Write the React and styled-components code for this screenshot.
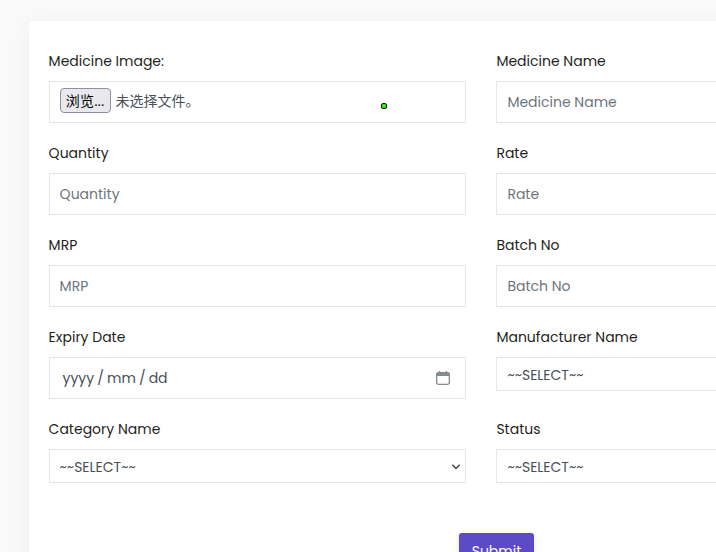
import React from "react";
import styled, { createGlobalStyle } from "styled-components";

const sans = `Poppins, Inter, "Noto Sans CJK SC", sans-serif`;

const GlobalStyle = createGlobalStyle`
  * { box-sizing: border-box; }
  body {
    margin: 0;
    background: #f9f9f9;
    font: 400 14px/21px ${sans};
    color: #212529;
  }
`;

const Page = styled.main`
  height: 552px;
  overflow: hidden;
  padding: 21px 0 0 29px;
`;

const Card = styled.form`
  width: 904px;
  height: 620px;
  padding: 30px 19.6px;
  background: #fff;
  border-radius: 4px;
  box-shadow: 0 5px 20px rgba(80, 80, 225, 0.06);
`;

const Fields = styled.div`
  display: grid;
  grid-template-columns: 417.8px 417.8px;
  column-gap: 30px;
  grid-auto-rows: 92px;
`;

const Field = styled.div`
  display: flex;
  flex-direction: column;
`;

const Label = styled.label`
  height: 30px;
  line-height: 21px;
  white-space: nowrap;
  color: #1f1f22;
`;

const Control = styled.div`
  position: relative;
  display: flex;
  align-items: center;
  width: 100%;
  height: ${(p) => (p.$short ? 34 : 42)}px;
  padding: 0 10px;
  border: 1px solid #e4e6e7;
  background: #fff;
  color: #495057;
`;

const TextInput = styled.input`
  width: 100%;
  height: 40px;
  padding: 0;
  border: 0;
  outline: 0;
  background: transparent;
  font: inherit;
  color: #495057;
  &::placeholder { color: #6c757d; opacity: 1; }
`;

const Select = styled.select`
  appearance: none;
  width: 100%;
  height: 32px;
  padding: 2px 0 0;
  border: 0;
  outline: 0;
  background: transparent;
  font: inherit;
  color: #495057;
`;

const Chevron = styled.svg`
  position: absolute;
  right: 4px;
  top: 12px;
`;

const BrowseButton = styled.button`
  flex: none;
  width: 51px;
  height: 25px;
  margin: -3px 5px 0 0;
  padding: 1px 0 0;
  border: 1px solid #8f8f9d;
  border-radius: 4px;
  background: #e9e9ed;
  color: #000;
  font: inherit;
  letter-spacing: 0.4px;
  white-space: nowrap;
`;

const FileStatus = styled.span`
  margin-top: -3px;
  font: 400 14px/21px "Noto Sans CJK SC", sans-serif;
  white-space: nowrap;
`;

const Dot = styled.span`
  position: absolute;
  left: 331px;
  top: 21px;
  width: 6px;
  height: 6px;
  border: 1px solid #001a00;
  border-radius: 2px;
  background: #2bef10;
`;

const DateParts = styled.span`
  margin-left: 3px;
  white-space: pre;
  word-spacing: -0.65px;
`;

const CalendarIcon = styled.svg`
  margin-left: auto;
  margin-right: 5px;
`;

const Actions = styled.div`
  padding: 22px 0 0 410.4px;
`;

const Submit = styled.button`
  display: block;
  width: 75px;
  height: 37px;
  padding: 0;
  border: 0;
  border-radius: 3px;
  background: #5c4ac7;
  color: #fff;
  font: inherit;
  box-shadow: 0 1px 5px rgba(0, 0, 0, 0.12);
`;

function TextField({ label }) {
  return (
    <Field>
      <Label>{label}</Label>
      <Control><TextInput placeholder={label} /></Control>
    </Field>
  );
}

function SelectField({ label }) {
  return (
    <Field>
      <Label>{label}</Label>
      <Control $short>
        <Select><option>~~SELECT~~</option></Select>
        <Chevron width="10" height="10" viewBox="0 0 10 10" fill="none" stroke="#495057" strokeWidth="1.6">
          <path d="M1.3 2.8 5 6.4 8.7 2.8" />
        </Chevron>
      </Control>
    </Field>
  );
}

export default function App() {
  return (
    <Page>
      <GlobalStyle />
      <Card onSubmit={(e) => e.preventDefault()}>
        <Fields>
          <Field>
            <Label>Medicine Image:</Label>
            <Control>
              <BrowseButton type="button">浏览...</BrowseButton>
              <FileStatus>未选择文件。</FileStatus>
              <Dot />
            </Control>
          </Field>
          <TextField label="Medicine Name" />
          <TextField label="Quantity" />
          <TextField label="Rate" />
          <TextField label="MRP" />
          <TextField label="Batch No" />
          <Field>
            <Label>Expiry Date</Label>
            <Control>
              <DateParts>yyyy / mm / dd</DateParts>
              <CalendarIcon width="14" height="14" viewBox="0 0 14 14">
                <path d="M3.5 0v2M10.5 0v2" stroke="#858b90" strokeWidth="1.3" />
                <rect x=".65" y="1.65" width="12.7" height="11.7" rx="1.8" fill="none" stroke="#858b90" strokeWidth="1.3" />
                <path d="M.6 2.8Q.6 1.2 2 1.2H12Q13.4 1.2 13.4 2.8V5H.6Z" fill="#858b90" />
              </CalendarIcon>
            </Control>
          </Field>
          <SelectField label="Manufacturer Name" />
          <SelectField label="Category Name" />
          <SelectField label="Status" />
        </Fields>
        <Actions><Submit>Submit</Submit></Actions>
      </Card>
    </Page>
  );
}
